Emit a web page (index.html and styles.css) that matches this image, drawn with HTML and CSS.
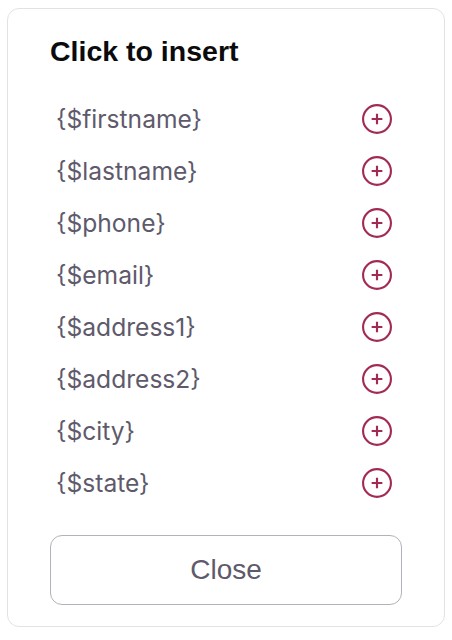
FILE: index.html
```html
<!DOCTYPE html>
<html>
<head>
<meta charset="utf-8">
<link rel="stylesheet" href="styles.css">
</head>
<body>
<div class="card">
  <h2 class="title">Click to insert</h2>
  <ul class="list">
    <li class="row"><span class="tag">{$firstname}</span><svg class="add" viewBox="0 0 28 28"><circle cx="14" cy="14" r="13" /><path d="M14 9v10M9 14h10" /></svg></li>
    <li class="row"><span class="tag">{$lastname}</span><svg class="add" viewBox="0 0 28 28"><circle cx="14" cy="14" r="13" /><path d="M14 9v10M9 14h10" /></svg></li>
    <li class="row"><span class="tag">{$phone}</span><svg class="add" viewBox="0 0 28 28"><circle cx="14" cy="14" r="13" /><path d="M14 9v10M9 14h10" /></svg></li>
    <li class="row"><span class="tag">{$email}</span><svg class="add" viewBox="0 0 28 28"><circle cx="14" cy="14" r="13" /><path d="M14 9v10M9 14h10" /></svg></li>
    <li class="row"><span class="tag">{$address1}</span><svg class="add" viewBox="0 0 28 28"><circle cx="14" cy="14" r="13" /><path d="M14 9v10M9 14h10" /></svg></li>
    <li class="row"><span class="tag">{$address2}</span><svg class="add" viewBox="0 0 28 28"><circle cx="14" cy="14" r="13" /><path d="M14 9v10M9 14h10" /></svg></li>
    <li class="row"><span class="tag">{$city}</span><svg class="add" viewBox="0 0 28 28"><circle cx="14" cy="14" r="13" /><path d="M14 9v10M9 14h10" /></svg></li>
    <li class="row"><span class="tag">{$state}</span><svg class="add" viewBox="0 0 28 28"><circle cx="14" cy="14" r="13" /><path d="M14 9v10M9 14h10" /></svg></li>
  </ul>
  <button class="close">Close</button>
</div>
</body>
</html>
```
FILE: styles.css
```css
html, body {
  margin: 0;
  padding: 0;
  background: #ffffff;
}
body {
  padding: 8px 0 0 7px;
}
.card {
  box-sizing: border-box;
  width: 438px;
  height: 619px;
  border: 1px solid #e2e2e4;
  border-radius: 12px;
  padding: 26px 42px 20px 42px;
  display: flex;
  flex-direction: column;
  background: #fff;
}
.title {
  margin: 0;
  font-family: "Liberation Sans", Arial, sans-serif;
  font-weight: bold;
  font-size: 28.5px;
  line-height: 32px;
  color: #0b0b0d;
}
.list {
  list-style: none;
  margin: 26px 0 0 0;
  padding: 0;
}
.row {
  height: 52px;
  display: flex;
  align-items: center;
  justify-content: space-between;
  padding: 0 10px 0 6px;
}
.tag {
  font-family: Inter, sans-serif;
  font-size: 24.6px;
  line-height: 30px;
  color: #5e5a6b;
}
.add {
  width: 30px;
  height: 30px;
  fill: none;
  stroke: #a32a52;
  stroke-width: 2;
}
.close {
  margin-top: 26px;
  height: 70px;
  width: 100%;
  background: #fff;
  border: 1px solid #b3b1b9;
  border-radius: 12px;
  font-family: "Liberation Sans", Arial, sans-serif;
  font-size: 28px;
  color: #5e5a6b;
}
```
